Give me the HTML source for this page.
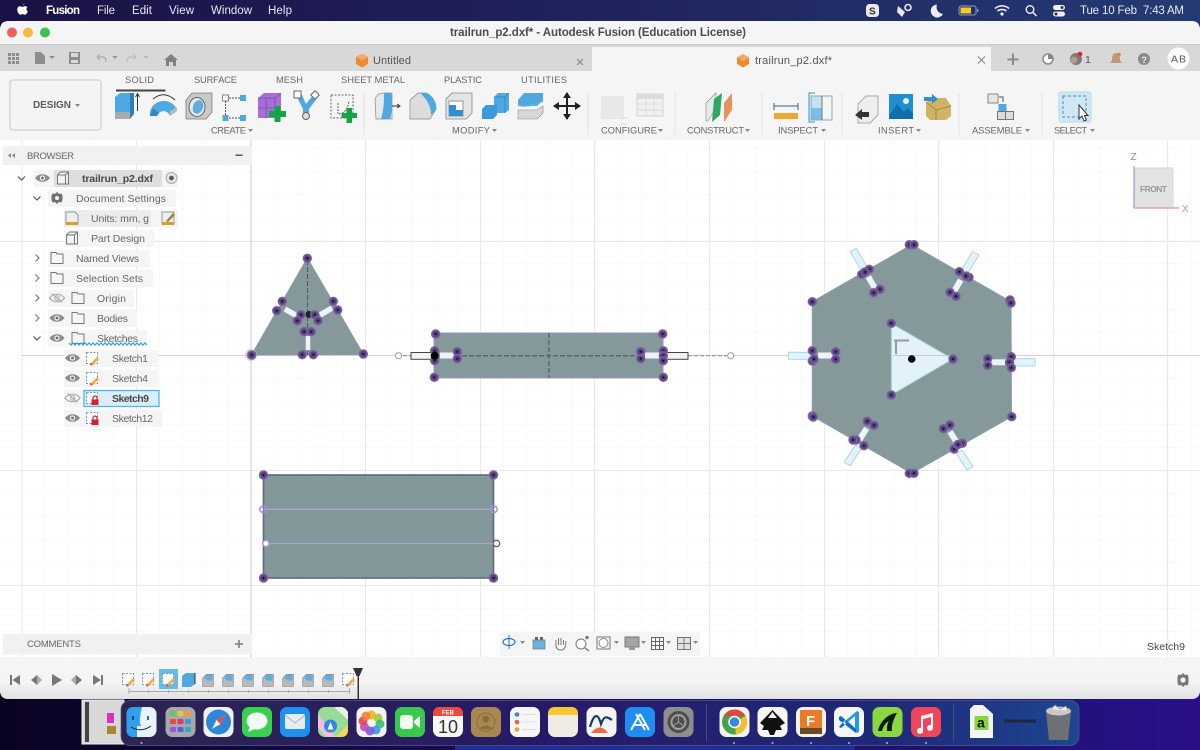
<!DOCTYPE html>
<html><head><meta charset="utf-8"><title>Fusion</title>
<style>
html,body{margin:0;padding:0;width:1200px;height:750px;overflow:hidden;background:#fff}
svg{display:block;filter:blur(.35px)}
text{font-family:"Liberation Sans",sans-serif}
</style></head><body>
<svg xmlns="http://www.w3.org/2000/svg" width="1200" height="750" viewBox="0 0 1200 750">
<defs>
<linearGradient id="menu" x1="0" x2="1" y1="0" y2="0"><stop offset="0" stop-color="#1a1245"/><stop offset=".5" stop-color="#20235d"/><stop offset="1" stop-color="#253a74"/></linearGradient>
<linearGradient id="wall" x1="0" x2="1" y1="0" y2="0"><stop offset="0" stop-color="#0b0322"/><stop offset=".3" stop-color="#150a48"/><stop offset=".8" stop-color="#1c1470"/><stop offset="1" stop-color="#2a0f8a"/></linearGradient>
<linearGradient id="dock" x1="0" x2="1" y1="0" y2="0"><stop offset="0" stop-color="#2c2650"/><stop offset=".45" stop-color="#261a68"/><stop offset=".8" stop-color="#1e2a78"/><stop offset="1" stop-color="#1d4690"/></linearGradient>
<linearGradient id="tl" x1="0" x2="0" y1="0" y2="1"><stop offset="0" stop-color="#f6f6f6"/><stop offset=".6" stop-color="#f4f4f4"/><stop offset="1" stop-color="#e2e2e2"/></linearGradient>
<pattern id="minor" patternUnits="userSpaceOnUse" x="251" y="10" width="22.94" height="23"><path d="M0 0V23M0 0H23" stroke="#f5f5f5" stroke-width="1" fill="none"/></pattern>
<g id="p"><circle r="4.7" fill="#7a5fa0"/><circle r="3.1" fill="#54407a"/><circle r="1" fill="#0c0c18"/></g>
<g id="eye"><path d="M-7.5 0C-4 -5 4 -5 7.5 0C4 5 -4 5 -7.5 0Z" fill="#8d8d8d"/><circle r="2.6" fill="#f4f4f4"/><circle r="1.4" fill="#6e6e6e"/></g>
<g id="eyeh"><path d="M-7.5 0C-4 -5 4 -5 7.5 0C4 5 -4 5 -7.5 0Z" fill="none" stroke="#a8a8a8" stroke-width="1.1"/><circle r="2.2" fill="none" stroke="#a8a8a8"/><path d="M-5 -4.5L5 4.5" stroke="#a8a8a8"/></g>
<g id="folder"><path d="M-6 -5.5H-1L0 -4H6V5.500H-6Z" fill="#f7f7f7" stroke="#777" stroke-width="1"/></g>
<g id="chevd"><path d="M-3.5 -1.5L0 2L3.5 -1.5" fill="none" stroke="#555" stroke-width="1.2"/></g>
<g id="chevr"><path d="M-1.5 -3.5L2 0L-1.5 3.5" fill="none" stroke="#777" stroke-width="1.2"/></g>
<g id="skp"><path d="M-5.5 -5.5H5.5V5.5H-5.5Z" fill="#fff" stroke="#7a98b0" stroke-dasharray="2 1.5"/><path d="M-1 5L5 -1L7 1L1 7Z" fill="#f2b04a"/><path d="M-1 5L1 7L-2 7.5Z" fill="#d8402c"/></g>
<g id="skl"><path d="M-5.5 -5.5H5.5V5.5H-5.5Z" fill="#fff" stroke="#7a98b0" stroke-dasharray="2 1.5"/><rect x="-.5" y="1.5" width="7" height="5.5" fill="#d5202f"/><path d="M1 1.5V0A2 2 0 0 1 5 0V1.5" fill="none" stroke="#d5202f" stroke-width="1.2"/></g>
<g id="mod"><path d="M-7 -3L-2 -8H7V8H-7Z" fill="#b9b9b9" stroke="#666" stroke-width=".7"/><path d="M-5 -3L-2 -7H6L6 -1C2 2 -1 1 -5 -3Z" fill="#5aaee2"/></g>
<g id="doc3d"><path d="M-5.5 -3L-2.5 -6H5.5V6H-5.5Z M-5.5 -3H2.5V6 M2.5 -3L5.5 -6" fill="#f2f2f2" stroke="#777"/></g>
</defs>

<!-- wallpaper / menu -->
<rect width="1200" height="750" fill="url(#wall)"/>
<rect x="455" y="746" width="400" height="4" fill="#1f2f98"/>
<rect width="1200" height="24" fill="url(#menu)"/>
<path d="M22.5 5.5C23.5 4.5 24 4 24.3 3C24.4 4.2 23.600 5.3 22.5 5.5ZM19.8 6.2C21 6.2 21.8 6.9 22.7 6.9C23.6 6.9 24.3 6 25.6 6.2C26.4 6.3 27 6.7 27.4 7.3C26 8.2 26.2 10.5 27.8 11.2C27.3 12.8 26 14.7 24.9 14.7C24 14.7 23.7 14.1 22.6 14.1C21.5 14.1 21.1 14.7 20.3 14.7C18.9 14.7 17.3 11.8 17.3 9.6C17.3 7.4 18.5 6.2 19.8 6.2Z" fill="#fff"/>
<g fill="#e9e9f2" font-size="11.5">
<text x="46" y="14" font-weight="700" fill="#fff" textLength="34">Fusion</text>
<text x="97" y="14" textLength="18">File</text>
<text x="132" y="14" textLength="20">Edit</text>
<text x="169" y="14" textLength="25">View</text>
<text x="211" y="14" textLength="41">Window</text>
<text x="268" y="14" textLength="24">Help</text>
<text x="1080" y="14" textLength="57">Tue 10 Feb</text>
<text x="1143" y="14" textLength="41">7:43 AM</text>
</g>
<rect x="866" y="4" width="13" height="13" rx="3.5" fill="#e8e8ee"/><text x="869" y="14.5" font-size="10" font-weight="700" fill="#333">S</text>
<path d="M898 6L905 12L902 17L897 12Z" fill="#e8e8ee"/><circle cx="908" cy="7.5" r="3" fill="none" stroke="#e8e8ee" stroke-width="1.6"/>
<path d="M937 4.5A6.5 6.5 0 1 0 943 14A7 7 0 0 1 937 4.5Z" fill="#f0f0f4"/>
<rect x="959" y="6" width="17" height="9" rx="2" fill="none" stroke="#9a9ab4"/><rect x="960.5" y="7.5" width="10.5" height="6" fill="#f3cc2c"/><rect x="977" y="9" width="1.3" height="3" fill="#9a9ab4"/>
<path d="M995 8.5C999 5 1005 5 1009 8.5M997.5 11C1000 9 1004 9 1006.5 11" fill="none" stroke="#f0f0f4" stroke-width="1.6"/><circle cx="1002" cy="14" r="1.6" fill="#f0f0f4"/>
<circle cx="1030" cy="9.5" r="3.8" fill="none" stroke="#f0f0f4" stroke-width="1.4"/><path d="M1033 12.5L1036.5 16" stroke="#f0f0f4" stroke-width="1.5"/>
<rect x="1053" y="5" width="12" height="5" rx="2.5" fill="#f0f0f4"/><rect x="1053" y="11.5" width="12" height="5" rx="2.5" fill="#f0f0f4"/><circle cx="1062" cy="7.5" r="1.5" fill="#333"/><circle cx="1056" cy="14" r="1.5" fill="#333"/>

<!-- window -->
<path d="M0 30Q0 21 9 21H1191Q1200 21 1200 30V690Q1200 699 1191 699H9Q0 699 0 690Z" fill="#fff"/>
<path d="M0 30Q0 21 9 21H1191Q1200 21 1200 30V44H0Z" fill="#f5f5f5"/>
<rect y="44" width="1200" height="1" fill="#c8c8c8"/>
<circle cx="12" cy="32.5" r="5" fill="#f0605a"/><circle cx="28" cy="32.5" r="5" fill="#f5bd3e"/><circle cx="45" cy="32.5" r="5" fill="#3cc24e"/>
<text x="450" y="36" font-size="11.5" font-weight="700" fill="#4c4c4c" textLength="296">trailrun_p2.dxf* - Autodesk Fusion (Education License)</text>

<!-- tab bar -->
<rect y="45" width="1200" height="26" fill="#d8d8d8"/>
<rect x="592" y="47" width="399" height="24" fill="#f5f5f5"/>
<rect y="71" width="1200" height="69" fill="#f5f5f5"/>
<g fill="#8d8d8d">
<rect x="8" y="53" width="3" height="3"/><rect x="12" y="53" width="3" height="3"/><rect x="16" y="53" width="3" height="3"/><rect x="8" y="57" width="3" height="3"/><rect x="12" y="57" width="3" height="3"/><rect x="16" y="57" width="3" height="3"/><rect x="8" y="61" width="3" height="3"/><rect x="12" y="61" width="3" height="3"/><rect x="16" y="61" width="3" height="3"/>
<path d="M35 52H41L45 56V64H35Z"/><path d="M49 56H55L52 59Z"/>
<path d="M69 52H80V64H69ZM71 53V57H78V53ZM71 60V63H78V60Z" fill-rule="evenodd"/>
</g>
<g fill="none" stroke="#a8a8a8" stroke-width="1.2"><path d="M97 57L100 54M97 57L100 60M97 57H103C105 57 106 59 106 62"/><path d="M136 57L133 54M136 57L133 60M136 57H130C128 57 127 59 127 62" stroke="#bbb"/></g>
<path d="M112 56H118L115 59Z" fill="#999"/><path d="M143 56H149L146 59Z" fill="#bbb"/>
<path d="M171 54L178 60H176V66H173V62H169V66H166V60H164Z" fill="#808080"/>
<path d="M362 54L368 57V64L362 67.5L356 64V57Z" fill="#ee8a32"/><path d="M356 57L362 60.5L368 57L362 54Z" fill="#f4a862"/>
<text x="373" y="64" font-size="11" fill="#555" textLength="38">Untitled</text>
<path d="M577 59L583 65M583 59L577 65" stroke="#888" stroke-width="1.1"/>
<path d="M743 54L749 57.5V64L743 67.5L737 64V57.5Z" fill="#ee8a32"/><path d="M737 57.5L743 61L749 57.5L743 54Z" fill="#f4a862"/>
<text x="755" y="64" font-size="11" fill="#555" textLength="77">trailrun_p2.dxf*</text>
<path d="M978 56.500L985 63.500M985 56.500L978 63.500" stroke="#888" stroke-width="1.1"/>
<path d="M1013 53.5V65M1007.5 59.5H1018.5" stroke="#8a8a8a" stroke-width="2"/>
<circle cx="1048" cy="59" r="5" fill="#fff" stroke="#888" stroke-width="1.5"/><path d="M1048 59V54A5 5 0 0 1 1053 59Z" fill="#888"/>
<circle cx="1076" cy="59" r="6" fill="#7a7a7a"/><circle cx="1074" cy="60" r="3.5" fill="#b59a8a"/><circle cx="1080" cy="54" r="2.3" fill="#e8202a"/>
<text x="1085" y="63" font-size="10.5" fill="#555">1</text>
<path d="M1116 53C1119 53 1120 56 1120 60L1122 63H1110L1112 60C1112 56 1113 53 1116 53Z" fill="#c09880"/><circle cx="1119" cy="54.5" r="1.8" fill="#ee7a3a"/>
<circle cx="1144" cy="59" r="6" fill="#8a8a8a"/><text x="1141.3" y="63" font-size="9.5" font-weight="700" fill="#eee">?</text>
<circle cx="1178.5" cy="58.5" r="11" fill="#fff"/><text x="1171" y="62.5" font-size="10.5" fill="#555" textLength="15">AB</text>

<!-- design button -->
<rect x="10" y="80" width="91" height="50" rx="3" fill="#f4f4f4" stroke="#d2d2d2" stroke-width="1.3"/>
<text x="33" y="108" font-size="10" font-weight="700" fill="#5c5c5c" textLength="38">DESIGN</text><path d="M75 104H80L77.5 107Z" fill="#888"/>
<g font-size="9.300" fill="#666">
<text x="125" y="83" textLength="29">SOLID</text>
<text x="194" y="83" textLength="43">SURFACE</text>
<text x="276" y="83" textLength="27">MESH</text>
<text x="341" y="83" textLength="64">SHEET METAL</text>
<text x="444" y="83" textLength="38">PLASTIC</text>
<text x="521" y="83" textLength="46">UTILITIES</text>
<text x="211" y="133.5" textLength="35">CREATE</text>
<text x="452" y="133.5" textLength="38">MODIFY</text>
<text x="601" y="133.5" textLength="56">CONFIGURE</text>
<text x="687" y="133.5" textLength="57">CONSTRUCT</text>
<text x="778" y="133.5" textLength="40">INSPECT</text>
<text x="878" y="133.5" textLength="36">INSERT</text>
<text x="972" y="133.5" textLength="50">ASSEMBLE</text>
<text x="1054" y="133.5" textLength="33">SELECT</text>
</g>
<g fill="#888"><path d="M248 129H253L250.5 132Z"/><path d="M492 129H497L494.5 132Z"/><path d="M658 129H663L660.5 132Z"/><path d="M745 129H750L747.5 132Z"/><path d="M821 129H826L823.5 132Z"/><path d="M916 129H921L918.5 132Z"/><path d="M1025 129H1030L1027.5 132Z"/><path d="M1090 129H1095L1092.5 132Z"/></g>
<rect x="116" y="89.5" width="49.5" height="2" fill="#444"/>
<g stroke="#e2e2e2" stroke-width="1"><path d="M364 93V135M588 93V135M675 93V135M762 93V135M842 93V135M959 93V135M1042 93V135"/></g>

<!-- create icons -->
<path d="M115 97L120 93H134V114H115Z" fill="#4ea9e2"/><path d="M115 112H134L130 119H115Z" fill="#aaa"/><path d="M130 93L134 93V114L130 119Z" fill="#2d7fb8"/><path d="M137.500 111V94M135.500 97L137.500 93.500L139.500 97" fill="none" stroke="#333" stroke-width="1"/>
<path d="M150 116C149 106 157 101 164 101C170 101 176 105 177 111L170 116C168 110 160 109 157 116Z" fill="#4ea9e2"/><path d="M150 116L157 116L159 113L153 108Z" fill="#3586c2"/><path d="M170 116L177 111V107L170 111Z" fill="#bbb"/><path d="M153 99Q164 90 175 100" fill="none" stroke="#333" stroke-width="1"/>
<path d="M186 100L192 93H212V112L206 119H186Z" fill="#c9c9c9" stroke="#777" stroke-width=".7"/><ellipse cx="197" cy="107" rx="8" ry="9.500" fill="#e8e8e8" stroke="#666"/><ellipse cx="198" cy="107" rx="5" ry="7" fill="#5faee2" transform="rotate(20 198 107)"/>
<rect x="222.500" y="95" width="6" height="6" fill="#fff" stroke="#888"/><rect x="240" y="95" width="6" height="6" fill="#4ea9e2"/><rect x="222.500" y="115" width="6" height="6" fill="#4ea9e2"/><rect x="240" y="115" width="6" height="6" fill="#4ea9e2"/><path d="M229 98H240M225.500 101V115M229 118H240" stroke="#555" stroke-dasharray="2 1" fill="none"/>
<path d="M258 98L264 93H281V112L275 118H258Z" fill="#a56fd8"/><path d="M258 98H275V118M275 98L281 93M266 98V118M258 108H275" fill="none" stroke="#7a4bb0" stroke-width=".8"/><path d="M274.500 106H280.500V111H286V117H280.500V122H274.500V117H269V111H274.500Z" fill="#13a543"/>
<path d="M296 95L303 109V119H309V109L318 97L314 94L306 104L301 93Z" fill="#4ea9e2"/><rect x="294" y="91" width="7" height="7" fill="#fff" stroke="#666"/><rect x="312" y="92" width="6" height="6" fill="#fff" stroke="#666" transform="rotate(45 315 95)"/><circle cx="306" cy="116" r="3.500" fill="#ddd" stroke="#666"/>
<rect x="331" y="95" width="22" height="23" fill="none" stroke="#666" stroke-dasharray="2 1.5"/><path d="M338 103V114C345 114 348 108 349 101" fill="none" stroke="#666" stroke-dasharray="2 1"/><path d="M346.500 108H352V113H357V118H352V123H346.500V118H341.500V113H346.500Z" fill="#13a543"/>
<!-- modify icons -->
<path d="M375 100Q376 93 385 93H392V119H376Z" fill="#e8e8e8" stroke="#888" stroke-width=".7"/><path d="M384 93H391C393 98 392 114 390 119H381C384 110 384 100 384 93Z" fill="#4ea9e2"/><path d="M392 106H399M397 104L400 106L397 108" stroke="#333" fill="none"/>
<path d="M410 100L418 93H426C433 96 436 103 436 109L430 119H410Z" fill="#dcdcdc" stroke="#888" stroke-width=".7"/><path d="M420 93H427C434 97 437 104 436 110L431 115C431 106 427 99 420 93Z" fill="#4ea9e2"/>
<path d="M446 99L452 93H472V113L466 119H446Z" fill="#e4e4e4" stroke="#888" stroke-width=".8"/><path d="M449 101H463V116H449Z" fill="#fff" stroke="#999"/><path d="M449 105H456V110H463V116H449Z" fill="#2f8fd0"/>
<path d="M494 97L498 93H509V110L505 113H494Z" fill="#4ea9e2"/><path d="M482 109L486 105H497V115L493 119H482Z" fill="#3b9bd8"/><path d="M494 97H505V113M505 97L509 93" fill="none" stroke="#2d7fb8" stroke-width=".7"/>
<path d="M518 100L524 93H543V100L537 106H518Z" fill="#4ea9e2"/><path d="M518 105Q530 108 543 101" stroke="#5ab2e8" fill="none" stroke-width="1.500"/><path d="M518 110L537 110L543 106V113L537 119H518Z" fill="#d8d8d8" stroke="#888" stroke-width=".6"/>
<path d="M567 93V119M554 106H580" stroke="#222" stroke-width="2"/><path d="M567 92L563 98H571ZM567 120L563 114H571ZM553 106L559 102V110ZM581 106L575 102V110Z" fill="#222"/>
<!-- configure -->
<rect x="601" y="96" width="23" height="23" fill="#e8e8e8"/><path d="M620 124H628M620 118H628" stroke="#ddd"/>
<rect x="637" y="94" width="26" height="22" fill="#f0f0f0" stroke="#d4d4d4"/><rect x="637" y="94" width="26" height="5" fill="#dcdcdc"/><path d="M637 104H663M637 110H663M646 99V116M654 99V116" stroke="#dcdcdc"/>
<!-- construct -->
<path d="M706 103L716 93V108L708 121H706Z" fill="#e8e8e8" stroke="#888" stroke-width=".6"/><path d="M714 99L722 93L720 115L712 122Z" fill="#2ea860"/><path d="M724 103L732 93V110L724 122Z" fill="#ea9060"/>
<!-- inspect -->
<rect x="774" y="113" width="24" height="6" fill="#f0a72e"/><path d="M774 106H798M774 103V110M798 103V110" stroke="#3a5f90"/>
<rect x="811" y="96" width="11" height="12" fill="#c3e0f5"/><rect x="811" y="108" width="11" height="12" fill="#7cbcea"/><rect x="811" y="96" width="21" height="24" fill="none" stroke="#8aa"/><path d="M822 96V120" stroke="#777"/><path d="M815 93H809V122H815" fill="none" stroke="#2f8fd0"/>
<!-- insert -->
<path d="M858 104L866 96H878V115L870 123H858Z" fill="#eee" stroke="#aaa"/><path d="M855 115L862 109V112H869V117H862V120Z" fill="#333"/>
<rect x="889" y="94" width="24" height="25" fill="#1f8fd0"/><circle cx="906" cy="101" r="3" fill="#e8f4fc"/><path d="M889 116L897 104L904 112L908 108L913 114V119H889Z" fill="#0f6ea8"/>
<path d="M926 102L936 98H946L951 106V116L946 120H930L926 116Z" fill="#d2b264"/><path d="M926 102L936 110L951 106M936 110V120" stroke="#a88a44" fill="none"/><rect x="924" y="97" width="9" height="4" fill="#2f8fd0"/><path d="M932 94L938 99L932 104Z" fill="#2f8fd0"/>
<!-- assemble -->
<rect x="988" y="94" width="10" height="9" fill="#e6e6e6" stroke="#888"/><path d="M999 97H1003V102" fill="none" stroke="#555"/><rect x="998.500" y="104" width="8" height="8" fill="#4ea9e2"/><rect x="997.500" y="111.500" width="8" height="8" fill="#ddd" stroke="#777"/><rect x="1005.500" y="111.500" width="8" height="8" fill="#ddd" stroke="#777"/>
<!-- select -->
<rect x="1059" y="92" width="32" height="30" rx="2" fill="#cfe8f5" stroke="#b0dcee"/><rect x="1063" y="96" width="23" height="21" fill="none" stroke="#5a8a90" stroke-dasharray="3 2"/><path d="M1079 105L1079 119L1082 116L1084 121L1086.500 120L1084.500 115.500H1088Z" fill="#fff" stroke="#333"/>

<!-- canvas -->
<rect y="140" width="1200" height="517" fill="#fff"/>
<rect y="140" width="1200" height="517" fill="url(#minor)"/>
<g stroke="#e9e9e9" fill="none"><path d="M365.500 140V657M480.500 140V657M594.500 140V657M709.500 140V657M824.500 140V657M938.500 140V657M1053.500 140V657M1167.500 140V657M136.500 140V657M22 140V657M0 241.500H1200M0 470.500H1200M0 585.500H1200"/></g>
<path d="M251 140V657" stroke="#c6c6e2"/>
<path d="M22 355.500H1200" stroke="#ecc9cd"/>

<!-- triangle -->
<path d="M307.300 258L363.500 354.500L251.500 355Z" fill="#85989a" stroke="#8d9aa8"/>
<path d="M307.500 260V355" stroke="#4a5a5e" stroke-dasharray="5 2"/>
<g stroke="#eef2fb" stroke-width="5.500"><path d="M285 309L297 316"/><path d="M320 315L332 308"/></g><path d="M308 336V350" stroke="#eef2fb" stroke-width="4.500"/>
<circle cx="251" cy="355" r="6" fill="#c8c0b8" opacity=".7"/>
<circle cx="309" cy="314.500" r="3.500" fill="#222"/>
<g>
<use href="#p" x="307.300" y="258.300"/><use href="#p" x="251.700" y="355"/><use href="#p" x="363.300" y="354"/>
<use href="#p" x="282.300" y="301.300"/><use href="#p" x="276.700" y="310.700"/><use href="#p" x="301" y="314.700"/><use href="#p" x="297.300" y="320.700"/><use href="#p" x="314.700" y="314.700"/><use href="#p" x="318" y="320.700"/><use href="#p" x="333.300" y="301.300"/><use href="#p" x="337.700" y="310"/><use href="#p" x="304" y="331.700"/><use href="#p" x="311.300" y="331.700"/><use href="#p" x="302.300" y="354.700"/><use href="#p" x="313.300" y="354.700"/>
</g>

<!-- long rect -->
<path d="M403 355.700H411M688 355.700H727" stroke="#8a8a8a" stroke-dasharray="4 2"/>
<circle cx="398.500" cy="355.700" r="3" fill="#fff" stroke="#999"/><circle cx="730.700" cy="355.700" r="3" fill="#fff" stroke="#999"/>
<rect x="434" y="333" width="229" height="45" fill="#85989a" stroke="#9c95c4"/>
<path d="M434 355.700H663" stroke="#44545a" stroke-dasharray="5 2"/><path d="M549 333V378" stroke="#44545a" stroke-dasharray="5 2"/>
<rect x="411" y="352.500" width="22.500" height="6.800" fill="#f2f2f2" stroke="#444"/><rect x="665.500" y="352.500" width="22.500" height="6.800" fill="#f2f2f2" stroke="#444"/>
<rect x="440" y="352.500" width="15" height="6" fill="#eef0fb"/><rect x="645" y="352.500" width="15" height="6" fill="#eef0fb"/>
<use href="#p" x="435.700" y="334"/><use href="#p" x="662.700" y="334"/><use href="#p" x="434.300" y="377.300"/><use href="#p" x="663.300" y="377.300"/><use href="#p" x="434.700" y="350.700"/><use href="#p" x="434.700" y="360.700"/><use href="#p" x="457.300" y="351.700"/><use href="#p" x="457.300" y="358.700"/><use href="#p" x="640.700" y="351.700"/><use href="#p" x="640.700" y="358.700"/><use href="#p" x="663.300" y="350.700"/><use href="#p" x="663.300" y="355.700"/><use href="#p" x="663.300" y="360.700"/>
<circle cx="434.700" cy="355.700" r="4" fill="#000"/>

<!-- hexagon outer slots -->
<g fill="#e3f3fb" stroke="#a9d6e8" stroke-width="1">
<rect x="788.300" y="352.300" width="24" height="7"/>
<rect x="1012" y="358.700" width="23" height="7.300" />
<path d="M850.300 251.700L856.300 248.300L867.300 267.300L861.300 270.700Z"/>
<path d="M972.500 251.500L978.800 255.100L967.100 274.500L960.900 270.900Z"/>
<path d="M855.300 445L861.300 448.400L850.300 465.700L844.300 462.300Z"/>
<path d="M962.300 450L956.300 453.400L967 470L973 466.600Z"/>
</g>
<path d="M911.700 244.700L1011 301.700L1011.500 416.700L911.700 473.300L812.300 416V301.700Z" fill="#85989a" stroke="#8d9aa8"/>
<path d="M891.300 323.300L953 359L891.300 395Z" fill="#e3f1fb" stroke="#9cc"/>
<path d="M893 355.500H953" stroke="#c6ccd6"/>
<path d="M894 340.500H909M896 340.500V354" stroke="#999" stroke-width="2" fill="none"/>
<g stroke="#eef2fb" stroke-width="6"><path d="M818 355.500H834"/><path d="M991 362.300H1007"/><path d="M868.300 276.700L876 290"/><path d="M960.700 280L953.300 292.700"/><path d="M866.700 428.300L859.300 440"/><path d="M950 431.700L957.300 443.300"/></g>
<circle cx="911.700" cy="359" r="3.800" fill="#000"/>
<g>
<use href="#p" x="909.300" y="244.700"/><use href="#p" x="914" y="244.700"/><use href="#p" x="909.300" y="473.300"/><use href="#p" x="914" y="473.300"/>
<use href="#p" x="812.300" y="301.700"/><use href="#p" x="1010" y="300"/><use href="#p" x="1011" y="303"/><use href="#p" x="1011.700" y="416.700"/><use href="#p" x="812.300" y="416"/><use href="#p" x="813.300" y="417"/>
<use href="#p" x="891.300" y="323.300"/><use href="#p" x="953" y="359"/><use href="#p" x="891.300" y="395"/>
<use href="#p" x="812.300" y="350.700"/><use href="#p" x="812.300" y="361"/><use href="#p" x="814" y="359"/><use href="#p" x="835.700" y="351.700"/><use href="#p" x="835.700" y="359.300"/>
<use href="#p" x="987.700" y="358.700"/><use href="#p" x="987.700" y="365.300"/><use href="#p" x="1011.300" y="356.700"/><use href="#p" x="1009.500" y="362.500"/><use href="#p" x="1011.300" y="367.700"/>
<use href="#p" x="869.300" y="269.300"/><use href="#p" x="861.700" y="274.300"/><use href="#p" x="865" y="272"/><use href="#p" x="880" y="289.300"/><use href="#p" x="873.700" y="292.700"/>
<use href="#p" x="959.300" y="271.700"/><use href="#p" x="969" y="277.300"/><use href="#p" x="966" y="276"/><use href="#p" x="950" y="292.300"/><use href="#p" x="956" y="296.300"/>
<use href="#p" x="867.300" y="421.300"/><use href="#p" x="874" y="425.300"/><use href="#p" x="856" y="440"/><use href="#p" x="853" y="440"/><use href="#p" x="864" y="445.700"/>
<use href="#p" x="950" y="425"/><use href="#p" x="943.300" y="428.700"/><use href="#p" x="962.300" y="443.300"/><use href="#p" x="954" y="449"/><use href="#p" x="958" y="444.500"/>
</g>

<!-- lower rect -->
<rect x="263.500" y="475" width="230" height="103" fill="#82989a" stroke="#5f6a78" stroke-width="1.600"/>
<path d="M263 509.300H494M266 543.500H496" stroke="#a9a2cf" stroke-width="1.300"/>
<g fill="none" stroke="#a98fdc" stroke-width="1.500"><circle cx="263" cy="509.300" r="3.200"/><circle cx="494" cy="509.300" r="3.200"/></g>
<circle cx="266" cy="543.500" r="3.200" fill="#fff" stroke="#a98fdc" stroke-width="1.500"/><circle cx="496.500" cy="543.500" r="3.200" fill="#fff" stroke="#666" stroke-width="1.300"/>
<use href="#p" x="263.500" y="475"/><use href="#p" x="493.500" y="475"/><use href="#p" x="263.500" y="578"/><use href="#p" x="493.500" y="578"/>

<!-- view cube -->
<rect x="1135" y="168" width="38" height="40" fill="#e2e4e4" stroke="#d6d6d6"/><rect x="1135" y="196" width="38" height="12" fill="#dfe4e2"/>
<text x="1140" y="192" font-size="8.500" font-weight="700" fill="#9a9a9a" textLength="27">FRONT</text>
<path d="M1134 166V208" stroke="#a9a2dc" stroke-width="1.300"/><path d="M1134 208H1179" stroke="#e2a6ac" stroke-width="1.500"/>
<text x="1130.500" y="160" font-size="10" fill="#8a84c4">Z</text><text x="1182" y="212" font-size="10" fill="#d88a94">X</text>

<!-- browser -->
<rect x="3" y="146" width="249" height="19" fill="#f1f1f1"/>
<path d="M11 153L8 155.500L11 158ZM15 153L12 155.500L15 158Z" fill="#888"/>
<text x="27" y="159" font-size="9.500" fill="#666" textLength="47">BROWSER</text>
<rect x="235.500" y="154.500" width="7" height="1.500" fill="#555"/>
<g fill="#f5f5f5">
<rect x="34" y="170" width="144" height="17" rx="2"/><rect x="48" y="190" width="128" height="17"/><rect x="64" y="210" width="114" height="17"/><rect x="64" y="230" width="90" height="17"/><rect x="48" y="250" width="102" height="17"/><rect x="48" y="270" width="105" height="17"/><rect x="48" y="290" width="86" height="17"/><rect x="48" y="310" width="89" height="17"/><rect x="48" y="330" width="99" height="17"/><rect x="64" y="350" width="94" height="17"/><rect x="64" y="370" width="94" height="17"/><rect x="64" y="390" width="95" height="17"/><rect x="64" y="410" width="98" height="17"/>
</g>
<rect x="54" y="170" width="108" height="17" rx="2" fill="#dedede"/><rect x="64" y="210" width="87" height="17" fill="#ececec"/>
<rect x="84" y="390.500" width="75" height="16" fill="#dcedf7" stroke="#4ab8ea" stroke-width="1.300"/>
<use href="#chevd" x="21.500" y="178"/><use href="#chevd" x="37" y="198"/><use href="#chevr" x="37" y="258"/><use href="#chevr" x="37" y="278"/><use href="#chevr" x="37" y="298"/><use href="#chevr" x="37" y="318"/><use href="#chevd" x="37" y="338"/>
<use href="#eye" x="42.500" y="178"/><use href="#eyeh" x="57" y="298"/><use href="#eye" x="57" y="318"/><use href="#eye" x="57" y="338"/><use href="#eye" x="72.500" y="358"/><use href="#eye" x="72.500" y="378"/><use href="#eyeh" x="72.500" y="398"/><use href="#eye" x="72.500" y="418"/>
<use href="#doc3d" x="63" y="178"/><use href="#doc3d" x="72" y="238"/>
<path d="M68 212H75L78 215V224H66V212Z" fill="#eee" stroke="#999"/><rect x="66" y="222" width="12" height="3" fill="#d5a02a"/>
<path d="M162 212H174V224H162Z" fill="#eee" stroke="#999"/><rect x="162" y="222" width="12" height="3" fill="#d5a02a"/><path d="M166 221L173 213L175 215L168 222Z" fill="#998a30"/>
<path d="M57 192L59 194L61.500 193.500L62.500 196V200L61.500 202.500L59 202L57 204L55 202L52.500 202.500L51.500 200V196L52.500 193.500L55 194Z" fill="#6f6f6f"/><circle cx="57" cy="198" r="2" fill="#f5f5f5"/>
<use href="#folder" x="57" y="258"/><use href="#folder" x="57" y="278"/><use href="#folder" x="78" y="298"/><use href="#folder" x="78" y="318"/><use href="#folder" x="78" y="338"/>
<use href="#skp" x="92" y="358"/><use href="#skp" x="92" y="378"/><use href="#skl" x="92" y="398"/><use href="#skl" x="92" y="418"/>
<circle cx="171.500" cy="178" r="5.500" fill="#e4e4e4" stroke="#aaa"/><circle cx="171.500" cy="178" r="2.300" fill="#555"/>
<g font-size="10.500" fill="#666">
<text x="82" y="182" font-weight="700" fill="#484848" textLength="71">trailrun_p2.dxf</text>
<text x="76" y="202" textLength="90">Document Settings</text>
<text x="91" y="222" textLength="58">Units: mm, g</text>
<text x="91" y="242" textLength="54">Part Design</text>
<text x="76" y="262" textLength="63">Named Views</text>
<text x="76" y="282" textLength="67">Selection Sets</text>
<text x="97" y="302" textLength="29">Origin</text>
<text x="97" y="322" textLength="31">Bodies</text>
<text x="97" y="342" textLength="41">Sketches</text>
<text x="112" y="362" textLength="36">Sketch1</text>
<text x="112" y="382" textLength="36">Sketch4</text>
<text x="112" y="402" font-weight="700" fill="#484848" textLength="37">Sketch9</text>
<text x="112" y="422" textLength="41">Sketch12</text>
</g>
<path d="M69 343L71 345L73 343L75 345L77 343L79 345L81 343L83 345L85 343L87 345L89 343L91 345L93 343L95 345L97 343L99 345L101 343L103 345L105 343L107 345L109 343L111 345L113 343L115 345L117 343L119 345L121 343L123 345L125 343L127 345L129 343L131 345L133 343L135 345L137 343L139 345L141 343L143 345L145 343L147 345" fill="none" stroke="#2ea5d8" stroke-width="1.200"/>

<!-- comments -->
<rect x="3" y="634" width="249" height="20" fill="#f1f1f1"/>
<text x="27" y="647" font-size="9.500" fill="#666" textLength="54">COMMENTS</text>
<path d="M239 640V648M235 644H243" stroke="#777" stroke-width="1.500"/>

<!-- nav bar -->
<rect x="500" y="632" width="200" height="24" fill="#f5f5f5"/>
<ellipse cx="509" cy="642" rx="6" ry="3.500" fill="none" stroke="#2f78b0" stroke-width="1.200"/><path d="M509 635V649" stroke="#2f78b0"/>
<path d="M520 641H525L522.500 644Z" fill="#888"/>
<rect x="533" y="640" width="12" height="9" fill="#6ab4dc" stroke="#777" stroke-width=".7"/><path d="M535 637H538V640H535ZM540 637H543V640H540Z" fill="#666"/>
<path d="M556 645V640M558.500 645V638M561 645V638M563.500 645V640M556 645Q556 650 561 650Q566 650 566 641" fill="none" stroke="#777"/>
<circle cx="581" cy="644" r="5" fill="#fff" stroke="#777"/><path d="M585 648L589 651" stroke="#777" stroke-width="1.400"/><circle cx="587" cy="637.500" r="1.700" fill="#777"/>
<rect x="597" y="637" width="13" height="12" fill="#f5f5f5" stroke="#777"/><circle cx="603.500" cy="643" r="4.500" fill="#fff" stroke="#888"/>
<path d="M614 641H619L616.500 644Z" fill="#888"/>
<rect x="625" y="637" width="14" height="10" fill="#a4a4a4" stroke="#777"/><rect x="629" y="647" width="6" height="3" fill="#999"/>
<path d="M641 641H646L643.500 644Z" fill="#888"/>
<path d="M651.500 637.500H663.500V649.500H651.500ZM651.500 641.500H663.500M651.500 645.500H663.500M655.500 637.500V649.500M659.500 637.500V649.500" fill="none" stroke="#666"/>
<path d="M666 641H671L668.500 644Z" fill="#888"/>
<path d="M677.500 637.500H690.500V649.500H677.500ZM677.500 643.500H690.500M684 637.500V649.500" fill="#e2e2e2" stroke="#777"/>
<path d="M693 641H698L695.500 644Z" fill="#888"/>
<text x="1147" y="650" font-size="10.500" fill="#444" textLength="38">Sketch9</text>

<!-- timeline -->
<path d="M0 657H1200V690Q1200 699 1191 699H9Q0 699 0 690Z" fill="url(#tl)"/>
<g fill="#777"><rect x="10" y="675" width="2" height="10"/><path d="M20 675V685L12.500 680Z"/><path d="M37 675V685L31 680Z"/><path d="M37 675L42 680L37 685Z" fill="#aaa"/><path d="M52 674L62 680L52 686Z"/><path d="M76 675V685L71 680Z" fill="#aaa"/><path d="M76 675L82 680L76 685Z"/><path d="M93 675L101 680L93 685Z"/><rect x="101" y="675" width="2" height="10"/></g>
<rect x="159" y="669" width="19" height="20" fill="#62bde8"/>
<use href="#skp" x="128" y="679"/><use href="#skp" x="148" y="679"/><use href="#skp" x="168" y="679"/>
<path d="M182 676L186 673H195V684L191 687H182Z" fill="#4ea9e2"/><path d="M195 673V684" stroke="#333"/>
<use href="#mod" transform="translate(208 687) scale(.75) translate(0,-9)"/><use href="#mod" transform="translate(228 687) scale(.75) translate(0,-9)"/><use href="#mod" transform="translate(248 687) scale(.75) translate(0,-9)"/><use href="#mod" transform="translate(268 687) scale(.75) translate(0,-9)"/><use href="#mod" transform="translate(288 687) scale(.75) translate(0,-9)"/><use href="#mod" transform="translate(308 687) scale(.75) translate(0,-9)"/><use href="#mod" transform="translate(328 687) scale(.75) translate(0,-9)"/>
<use href="#skp" x="348" y="679"/>
<path d="M129 691.500H350M129 688V694M148.500 690V693M168.500 690V693M188.500 690V693M208.500 690V693M228.500 690V693M248.500 690V693M268.500 690V693M288.500 690V693M308.500 690V693M328.500 690V693M349.500 688V694" stroke="#aaa" fill="none"/>
<path d="M353 668H363L359.500 676H356.500Z" fill="#333"/><rect x="357.500" y="674" width="1.500" height="29" fill="#333"/>
<path d="M1183 673L1185 675L1187.500 674.500L1188.500 677V683L1187.500 685.500L1185 685L1183 687L1181 685L1178.500 685.500L1177.500 683V677L1178.500 674.500L1181 675Z" fill="#777"/><circle cx="1183" cy="680" r="2.600" fill="#f4f4f4"/>

<!-- dock -->
<rect x="82" y="700" width="42" height="44" fill="#d8d8d8" stroke="#eee"/><rect x="85" y="702" width="4" height="40" fill="#444"/><rect x="107" y="713" width="7" height="10" fill="#dd30c0"/><rect x="107" y="726" width="9" height="8" fill="#a58a30"/>
<rect x="121" y="700.500" width="958" height="45" rx="9" fill="url(#dock)" stroke="#5a5690" stroke-width=".7"/>
<!-- finder -->
<rect x="126.500" y="707" width="30" height="30" rx="7" fill="#e8f2fa"/><path d="M126.500 714Q126.500 707 133.500 707H142C140 715 139 722 141 726H137V737H133.500Q126.500 737 126.500 730Z" fill="#2f9ff0"/><path d="M133 716V720M148 716V720" stroke="#123" stroke-width="1.400"/><path d="M131 727Q141 733 151 726" stroke="#123" fill="none"/>
<!-- launchpad -->
<rect x="165.500" y="707" width="30" height="30" rx="7" fill="#a7a7ae"/>
<g><rect x="170" y="711" width="6" height="5" rx="1" fill="#69c262"/><rect x="177.500" y="711" width="6" height="5" rx="1" fill="#e8c73a"/><rect x="185" y="711" width="6" height="5" rx="1" fill="#ef9f3a"/><rect x="170" y="719" width="6" height="5" rx="1" fill="#e04a4a"/><rect x="177.500" y="719" width="6" height="5" rx="1" fill="#e03a5a"/><rect x="185" y="719" width="6" height="5" rx="1" fill="#3a9ae0"/><rect x="170" y="727" width="6" height="5" rx="1" fill="#a050e0"/><rect x="177.500" y="727" width="6" height="5" rx="1" fill="#5060e0"/><rect x="185" y="727" width="6" height="5" rx="1" fill="#30b0b0"/></g>
<!-- safari -->
<rect x="203.500" y="707" width="30" height="30" rx="7" fill="#eef0f4"/><circle cx="218.500" cy="722" r="12.500" fill="#2f86d8"/><path d="M225 715L220.500 724L212 729L216.500 720Z" fill="#f4f4f4"/><path d="M225 715L216.500 720L220.500 724Z" fill="#e8483a"/>
<!-- messages -->
<rect x="242" y="707" width="30" height="30" rx="7" fill="#3ad04f"/><ellipse cx="257" cy="721" rx="10.500" ry="8.500" fill="#f4fbf4"/><path d="M250 726L248 732L255 729Z" fill="#f4fbf4"/>
<!-- mail -->
<rect x="280" y="707" width="30" height="30" rx="7" fill="#1f8ff0"/><rect x="285" y="714" width="20" height="15" rx="1.500" fill="#e6ecf2"/><path d="M285 715L295 723L305 715" fill="none" stroke="#a8b8c8"/>
<!-- maps -->
<rect x="318" y="707" width="30" height="30" rx="7" fill="#98dc98"/><path d="M318 714L336 737H326L318 727Z" fill="#f0c0d8"/><path d="M334 707L348 720V712L342 707Z" fill="#e8f4e0"/><path d="M336 737L348 725V730Q348 737 341 737Z" fill="#f5d85a"/><circle cx="330.500" cy="726" r="6.500" fill="#2f86e8"/><path d="M330.500 722L333.500 729.500H327.500Z" fill="#fff"/>
<!-- photos -->
<rect x="356.500" y="707" width="30" height="30" rx="7" fill="#f4f4f4"/>
<g><circle cx="371.500" cy="715" r="4.500" fill="#f5b82e"/><circle cx="378" cy="718" r="4.500" fill="#a8cc3a" opacity=".9"/><circle cx="380" cy="724" r="4.500" fill="#3abf6e" opacity=".9"/><circle cx="376" cy="730" r="4.500" fill="#3a9ae0" opacity=".9"/><circle cx="370" cy="731" r="4.500" fill="#7a5ae0" opacity=".9"/><circle cx="364.500" cy="727" r="4.500" fill="#c04ac0" opacity=".9"/><circle cx="363" cy="721" r="4.500" fill="#e0445a" opacity=".9"/><circle cx="366" cy="716" r="4.500" fill="#f0823a" opacity=".9"/></g>
<!-- facetime -->
<rect x="395" y="707" width="30" height="30" rx="7" fill="#38c84e"/><rect x="400" y="715" width="13" height="14" rx="3" fill="#f2fbf2"/><path d="M414 721L420 716V728L414 723Z" fill="#f2fbf2"/>
<!-- calendar -->
<rect x="433" y="707" width="30" height="30" rx="7" fill="#f6f6f6"/><path d="M433 716V714Q433 707 440 707H456Q463 707 463 714V716Z" fill="#ec4a3e"/><text x="442" y="714.500" font-size="6" font-weight="700" fill="#fff">FEB</text><text x="438" y="733" font-size="18" fill="#333" textLength="20">10</text>
<!-- contacts -->
<rect x="471" y="707" width="30" height="30" rx="7" fill="#a88850"/><circle cx="486" cy="722" r="9" fill="none" stroke="#8a6e3c"/><circle cx="486" cy="719" r="3.500" fill="#8a6e3c"/><path d="M479 729Q486 722 493 729" fill="#8a6e3c"/>
<!-- reminders -->
<rect x="510" y="707" width="30" height="30" rx="7" fill="#f6f6f6"/><circle cx="517" cy="714.500" r="2.300" fill="#3a86e8"/><circle cx="517" cy="722" r="2.300" fill="#f0603a"/><circle cx="517" cy="729.500" r="2.300" fill="#f09a3a"/><path d="M522 714.500H536M522 722H536M522 729.500H536" stroke="#ddd"/>
<!-- notes -->
<rect x="548" y="707" width="30" height="30" rx="7" fill="#f0ece4"/><path d="M548 714Q548 707 555 707H571Q578 707 578 714V715H548Z" fill="#f5c92e"/>
<!-- freeform -->
<rect x="586.500" y="707" width="30" height="30" rx="7" fill="#f4f4f4"/><path d="M590 727C594 713 598 713 601 724C604 716 606 716 612 720" fill="none" stroke="#113c6c" stroke-width="2.200"/><path d="M591 733Q600 722 608 733Z" fill="#ec6a40"/>
<!-- appstore -->
<rect x="625" y="707" width="30" height="30" rx="7" fill="#1f8ef0"/><path d="M640 714L631 730M640 714L649 730M633 725H647M636 714L645 730" stroke="#f4f8fc" stroke-width="2" fill="none"/>
<!-- settings -->
<rect x="663.500" y="707" width="30" height="30" rx="7" fill="#8e8e8e"/><circle cx="678.500" cy="722" r="11" fill="#4e4e4e"/><circle cx="678.500" cy="722" r="7" fill="none" stroke="#a0a0a0" stroke-width="2"/><path d="M678.500 715V722L684 726M678.500 722L673 726" stroke="#a0a0a0" fill="none"/>
<path d="M706.500 704V741M953.500 704V741" stroke="#4a4a80"/>
<!-- chrome -->
<rect x="719.500" y="707" width="30" height="30" rx="7" fill="#f2f2f2"/><circle cx="734.500" cy="722" r="12.500" fill="#43a54a"/><path d="M734.500 709.500A12.500 12.500 0 0 1 745.500 716H734.500L724 716A12.500 12.500 0 0 1 734.500 709.500Z" fill="#e0473a"/><path d="M745.500 716A12.500 12.500 0 0 1 736 734.500L734.500 722Z" fill="#f2c02e"/><circle cx="734.500" cy="722" r="5.500" fill="#3a86e8" stroke="#fff" stroke-width="1.500"/>
<!-- inkscape -->
<rect x="757.500" y="707" width="30" height="30" rx="7" fill="#f6f6f6"/><path d="M772.500 710L785 723L780 726L782 730H776L774 735H770L768 730H762L764 726L760 723Z" fill="#111"/><path d="M772.500 712L768 718H777Z" fill="#f0f0f0"/>
<!-- fusion -->
<rect x="796" y="707" width="30" height="30" rx="7" fill="#f4f0ea"/><rect x="800" y="710" width="22" height="21" fill="#ea7a26"/><text x="806" y="726" font-size="15" font-weight="700" fill="#fff">F</text><rect x="800" y="728" width="22" height="6" fill="#6a4828"/>
<!-- vscode -->
<rect x="834" y="707" width="30" height="30" rx="7" fill="#f6f6f6"/><path d="M857 711L844 722L857 733L859 732V712ZM855 716V728L848 722Z" fill="#1f9ce8" fill-rule="evenodd"/><path d="M839 717L841 716L856 729V733L839 720ZM839 727L841 728L847 723L845 720Z" fill="#0e6db8"/>
<!-- a -->
<rect x="872.500" y="707" width="30" height="30" rx="7" fill="#8bd83e"/><path d="M878 731C880 720 890 713 897 713C893 720 891 727 892 731H887C887 727 887 724 889 721C885 723 883 727 882 731Z" fill="#0c1a0c"/>
<!-- music -->
<rect x="911" y="707" width="30" height="30" rx="7" fill="#f2455a"/><path d="M921 716L933 713V727.500A3 3 0 1 1 931 725V717L923 719V730.500A3 3 0 1 1 921 728Z" fill="#fff"/>
<!-- doc -->
<path d="M974 705H983L993 714V738H970V709Z" fill="#f4f4f4"/><rect x="974.500" y="716" width="14" height="14" fill="#86d83a"/><text x="977" y="727.500" font-size="14" font-weight="700" fill="#111">a</text>
<!-- stack -->
<path d="M1004 721H1036" stroke="#25253a" stroke-width="3"/>
<!-- trash -->
<path d="M1046 712H1071L1068 740H1049Z" fill="#6e7074"/><ellipse cx="1058.500" cy="711" rx="12.500" ry="4.500" fill="#c8c8c8"/><path d="M1051 709L1055 705L1060 709L1066 706L1068 711" fill="#e8e8e8" stroke="#888" stroke-width=".6"/>
<g fill="#9a96d8"><circle cx="141.500" cy="743" r="1.100"/><circle cx="734" cy="743" r="1.100"/><circle cx="772.500" cy="743" r="1.100"/><circle cx="811" cy="743" r="1.100"/><circle cx="849" cy="743" r="1.100"/><circle cx="887" cy="743" r="1.100"/><circle cx="926" cy="743" r="1.100"/></g>
</svg>
</body></html>
